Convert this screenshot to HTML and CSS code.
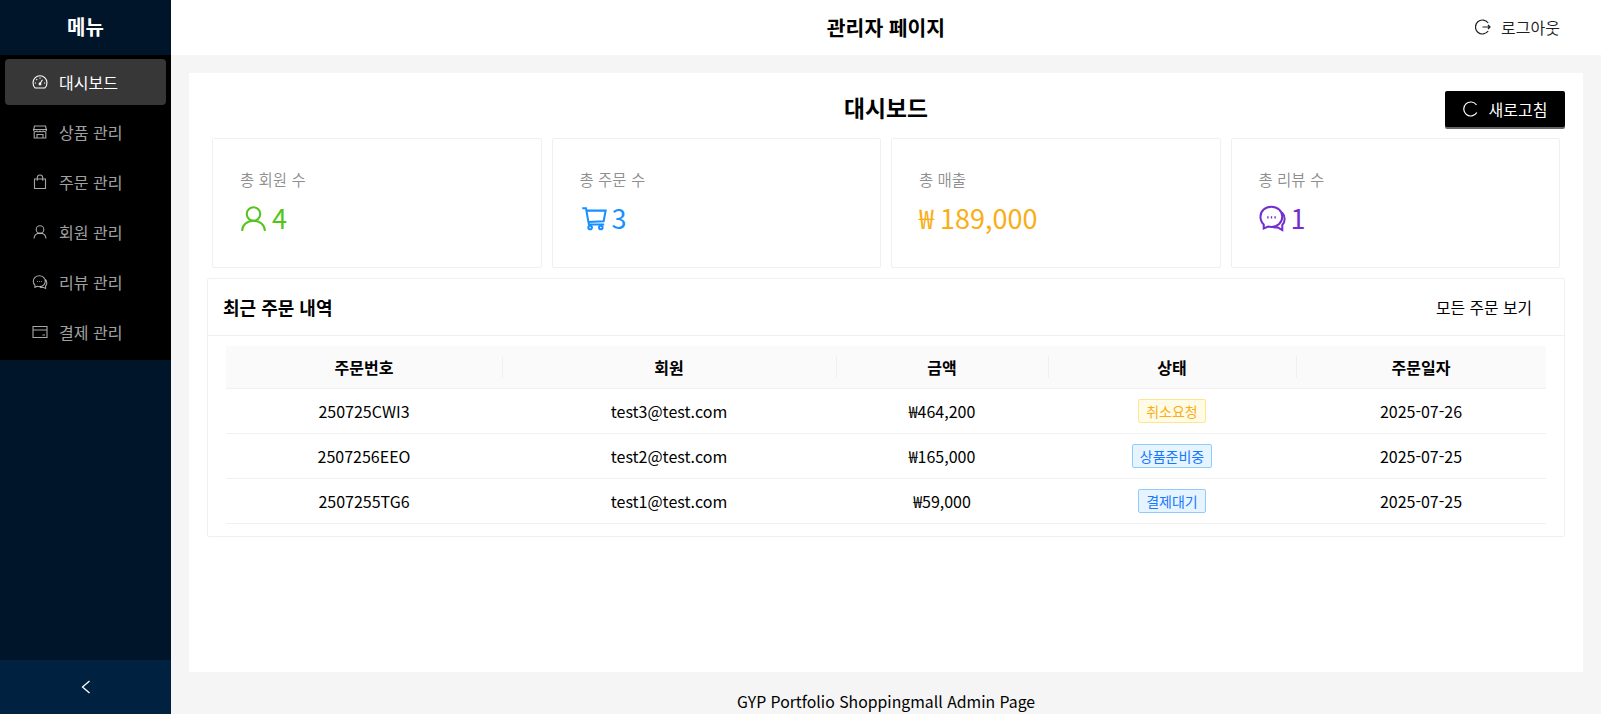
FILE: index.html
```html
<!DOCTYPE html>
<html lang="ko">
<head>
  <meta charset="UTF-8" />
  <meta name="viewport" content="width=device-width, initial-scale=1.0" />
  <title>관리자 페이지</title>
  <link rel="stylesheet" href="styles.css">
</head>
<body>
  <div class="layout">
    <aside class="sider">
      <div class="sider-logo">메뉴</div>
      <ul class="menu">
        <li class="menu-item active">
          <svg class="menu-icon" viewBox="0 0 16 16"><path d="M3.200 14h9.600c1.400-1.100 2.200-3 2.200-5.200a7 7 0 0 0-14 0c0 2.200.8 4.100 2.200 5.200z"/><path d="M8 9.500l2.500-3.700M2.800 9h1.200M12 9h1.200M4.400 5.200l.8.8M8 3.500v1.200"/><circle cx="8" cy="10" r=".9"/></svg>
          <span>대시보드</span>
        </li>
        <li class="menu-item">
          <svg class="menu-icon" viewBox="0 0 16 16"><path d="M2.500 2h11l1 4a1.900 1.900 0 0 1-3.300 1 2.300 2.300 0 0 1-3.200 0 2.300 2.300 0 0 1-3.200 0A1.900 1.900 0 0 1 1.500 6z"/><path d="M2.200 8v6h11.600V8M1.500 5.500h13M5 14v-3.500h6V14"/></svg>
          <span>상품 관리</span>
        </li>
        <li class="menu-item">
          <svg class="menu-icon" viewBox="0 0 16 16"><path d="M2.500 5h11v9.500h-11zM5.300 6.800V3.700a2.700 2.700 0 0 1 5.400 0v3.100"/></svg>
          <span>주문 관리</span>
        </li>
        <li class="menu-item">
          <svg class="menu-icon" viewBox="0 0 16 16"><circle cx="8" cy="5.500" r="3.800"/><path d="M2 14.500c.2-3.300 2.800-5.200 6-5.200s5.800 1.900 6 5.200"/></svg>
          <span>회원 관리</span>
        </li>
        <li class="menu-item">
          <svg class="menu-icon" viewBox="0 0 16 16"><path d="M7.300 1.800c-3.400 0-6 2.400-6 5.500 0 1.500.6 2.800 1.600 3.800v2.200l2.400-1a7 7 0 0 0 2 .3c3.400 0 6-2.300 6-5.300s-2.600-5.500-6-5.500z"/><path d="M13.300 5.500c1 1 1.500 2.200 1.500 3.500 0 1.300-.5 2.300-1.200 3v2.400l-2.600-1.100c-1 .2-2 .1-3-.2"/><path d="M5 7.500h.8M7 7.500h.8M9 7.500h.8"/></svg>
          <span>리뷰 관리</span>
        </li>
        <li class="menu-item">
          <svg class="menu-icon" viewBox="0 0 16 16"><path d="M1 2.500h14v11H1zM1 6h14M10.500 11h2.500"/></svg>
          <span>결제 관리</span>
        </li>
      </ul>
      <div class="sider-trigger">
        <svg class="trigger-icon" viewBox="0 0 10 14"><path d="M8.500 1L1.500 7l7 6"/></svg>
      </div>
    </aside>

    <div class="main">
      <header class="topbar">
        <h1 class="topbar-title">관리자 페이지</h1>
        <div class="logout">
          <svg class="logout-icon" viewBox="0 0 16 16"><path d="M13.200 4A7 7 0 1 0 13.200 12"/><path d="M7.500 8h7.500M13 6l2 2-2 2"/></svg>
          <span>로그아웃</span>
        </div>
      </header>

      <main class="content">
        <div class="page-head">
          <h2 class="page-title">대시보드</h2>
          <button class="refresh-btn">
            <svg class="refresh-icon" viewBox="0 0 16 16"><path d="M13.800 11.500A7 7 0 1 1 13.500 4"/></svg>
            <span>새로고침</span>
          </button>
        </div>

        <div class="stats">
          <div class="stat-card">
            <div class="stat-label">총 회원 수</div>
            <div class="stat-value green">
              <svg class="stat-icon" viewBox="0 0 24 24"><circle cx="12" cy="8" r="6"/><path d="M1.800 23c.3-5.400 4.600-9 10.200-9s9.900 3.600 10.200 9"/></svg>
              <span>4</span>
            </div>
          </div>
          <div class="stat-card">
            <div class="stat-label">총 주문 수</div>
            <div class="stat-value blue">
              <svg class="stat-icon" viewBox="0 0 24 24"><path d="M2 2.800h3.300l2.600 14.500h13.600M5.800 5h17l-1.800 9.500-13.400.7"/><circle cx="9" cy="20" r="1.600"/><circle cx="18.500" cy="20" r="1.600"/></svg>
              <span>3</span>
            </div>
          </div>
          <div class="stat-card">
            <div class="stat-label">총 매출</div>
            <div class="stat-value orange"><span>₩ 189,000</span></div>
          </div>
          <div class="stat-card">
            <div class="stat-label">총 리뷰 수</div>
            <div class="stat-value purple">
              <svg class="stat-icon" viewBox="0 0 24 24"><path d="M11 1.500C5.500 1.500 1.300 5.300 1.300 10.500c0 2.800 1.100 5.200 2.900 6.800v3.500l3.900-1.700c1 .3 1.900.4 2.900.4 5.400 0 9.700-3.800 9.700-9s-4.300-9-9.700-9z"/><path d="M20.500 6.500c1.500 1.700 2.300 3.700 2.300 6 0 2.200-.8 4-2.100 5.300v4.500l-4.200-2.500c-1.700.4-3.400.2-5-.4"/><path d="M7.300 11h1.200M10.500 11h1.200M13.700 11h1.200"/></svg>
              <span>1</span>
            </div>
          </div>
        </div>

        <section class="orders">
          <div class="orders-head">
            <h3 class="orders-title">최근 주문 내역</h3>
            <a class="orders-link">모든 주문 보기</a>
          </div>
          <div class="orders-body">
            <table class="orders-table">
              <colgroup>
                <col class="col-no"><col class="col-user"><col class="col-price"><col class="col-status"><col class="col-date">
              </colgroup>
              <thead>
                <tr><th>주문번호</th><th>회원</th><th>금액</th><th>상태</th><th>주문일자</th></tr>
              </thead>
              <tbody>
                <tr>
                  <td>250725CWI3</td><td>test3@test.com</td><td>₩464,200</td>
                  <td><span class="tag tag-gold">취소요청</span></td><td>2025-07-26</td>
                </tr>
                <tr>
                  <td>2507256EEO</td><td>test2@test.com</td><td>₩165,000</td>
                  <td><span class="tag tag-blue">상품준비중</span></td><td>2025-07-25</td>
                </tr>
                <tr>
                  <td>2507255TG6</td><td>test1@test.com</td><td>₩59,000</td>
                  <td><span class="tag tag-blue">결제대기</span></td><td>2025-07-25</td>
                </tr>
              </tbody>
            </table>
          </div>
        </section>
      </main>

      <footer class="footer">GYP Portfolio Shoppingmall Admin Page</footer>
    </div>
  </div>
</body>
</html>
```

FILE: styles.css
```css
* {
  box-sizing: border-box;
}
html, body {
  height: 100%;
  margin: 0;
  overflow: hidden;
}
body {
  font-family: "Noto Sans CJK KR", "Noto Sans", sans-serif;
  font-size: 16px;
  color: rgba(0, 0, 0, 0.88);
  background: #f5f5f5;
}
svg {
  display: block;
  fill: none;
  stroke: currentColor;
}
h1, h2, h3 {
  margin: 0;
}

.layout {
  display: flex;
  height: 714px;
}

/* sider */
.sider {
  width: 171px;
  flex: none;
  display: flex;
  flex-direction: column;
  background: #001529;
}
.sider-logo {
  height: 55px;
  padding-bottom: 2px;
  display: flex;
  align-items: center;
  justify-content: center;
  color: #fff;
  font-size: 20px;
  font-weight: 700;
}
.menu {
  list-style: none;
  margin: 0;
  padding: 4px 0 0;
  height: 305px;
  background: #000;
}
.menu-item {
  height: 46px;
  margin: 0 5px 4px;
  padding-left: 27px;
  display: flex;
  align-items: center;
  gap: 11px;
  border-radius: 4px;
  color: rgba(255, 255, 255, 0.65);
}
.menu-item.active {
  background: #373737;
  color: #fff;
}
.menu-icon {
  width: 16px;
  height: 16px;
  stroke-width: 1.1;
}
.sider-trigger {
  margin-top: auto;
  height: 54px;
  display: flex;
  align-items: center;
  justify-content: center;
  background: #002140;
  color: #fff;
}
.trigger-icon {
  width: 10px;
  height: 14px;
  stroke-width: 1.3;
}

/* header */
.main {
  flex: 1;
  min-width: 0;
  display: flex;
  flex-direction: column;
}
.topbar {
  height: 55px;
  flex: none;
  position: relative;
  padding-bottom: 1px;
  display: flex;
  align-items: center;
  justify-content: center;
  background: #fff;
}
.topbar-title {
  font-size: 20.4px;
  font-weight: 700;
  color: #000;
}
.logout {
  position: absolute;
  right: 41px;
  top: 0;
  height: 54px;
  display: flex;
  align-items: center;
  gap: 10px;
}
.logout-icon {
  width: 16px;
  height: 16px;
  stroke-width: 1.2;
}

/* content */
.content {
  height: 599px;
  flex: none;
  margin: 18px 18px 0;
  padding: 18px;
  background: #fff;
}
.page-head {
  position: relative;
  height: 47px;
  display: flex;
  align-items: flex-start;
  justify-content: center;
}
.page-title {
  font-size: 22.8px;
  font-weight: 700;
  color: #000;
  line-height: 34px;
}
.refresh-btn {
  position: absolute;
  right: 0;
  top: 0;
  width: 120px;
  height: 36px;
  display: flex;
  align-items: center;
  justify-content: center;
  gap: 10px;
  border: 0;
  border-radius: 2px;
  background: #000;
  box-shadow: 0 2px 0 rgba(0, 0, 0, 0.6);
  color: #fff;
  font: inherit;
  font-size: 16px;
}
.refresh-icon {
  width: 16px;
  height: 16px;
  stroke-width: 1.2;
}

.stats {
  display: grid;
  grid-template-columns: repeat(4, 1fr);
  gap: 10px;
  padding: 0 5px;
}
.stat-card {
  height: 130px;
  padding: 27px;
  border: 1px solid #f0f0f0;
  border-radius: 2px;
}
.stat-label {
  color: rgba(0, 0, 0, 0.45);
  font-size: 15.5px;
  line-height: 26px;
  margin-bottom: 6px;
}
.stat-value {
  display: flex;
  align-items: center;
  gap: 5px;
  font-size: 27px;
  line-height: 40px;
}
.stat-icon {
  width: 27px;
  height: 27px;
  stroke-width: 1.8;
}
.green { color: #52c41a; }
.blue { color: #1890ff; }
.orange { color: #faad14; }
.purple { color: #722ed1; }

/* orders card */
.orders {
  margin-top: 10px;
  height: 259px;
  border: 1px solid #f0f0f0;
  border-radius: 2px;
}
.orders-head {
  height: 57px;
  padding: 0 32px 0 15px;
  display: flex;
  align-items: center;
  justify-content: space-between;
  border-bottom: 1px solid #f0f0f0;
}
.orders-title {
  font-size: 18px;
  font-weight: 700;
  color: #000;
}
.orders-link {
  color: #000;
  font-size: 15.8px;
}
.orders-body {
  padding: 10px 18px 0;
}
.orders-table {
  width: 100%;
  table-layout: fixed;
  border-collapse: collapse;
  color: #000;
}
.col-no { width: 276px; }
.col-user { width: 334px; }
.col-price { width: 212px; }
.col-status { width: 248px; }
.orders-table th {
  position: relative;
  height: 42px;
  padding: 0;
  background: #fafafa;
  font-weight: 700;
  text-align: center;
  border-bottom: 1px solid #f0f0f0;
}
.orders-table th + th::before {
  content: "";
  position: absolute;
  left: 0;
  top: 10px;
  height: 22px;
  width: 1px;
  background: #f0f0f0;
}
.orders-table td {
  height: 45px;
  padding: 0;
  text-align: center;
  border-bottom: 1px solid #f0f0f0;
}
.tag {
  display: inline-block;
  padding: 0 7px;
  font-size: 14px;
  line-height: 22px;
  border: 1px solid;
  border-radius: 2px;
}
.tag-gold {
  color: #faad14;
  background: #fffbe6;
  border-color: #ffe58f;
}
.tag-blue {
  color: #1677ff;
  background: #e6f4ff;
  border-color: #91caff;
}

.footer {
  flex: 1;
  display: flex;
  align-items: center;
  justify-content: center;
  padding-top: 16px;
  color: #000;
  font-size: 15.8px;
}
```
